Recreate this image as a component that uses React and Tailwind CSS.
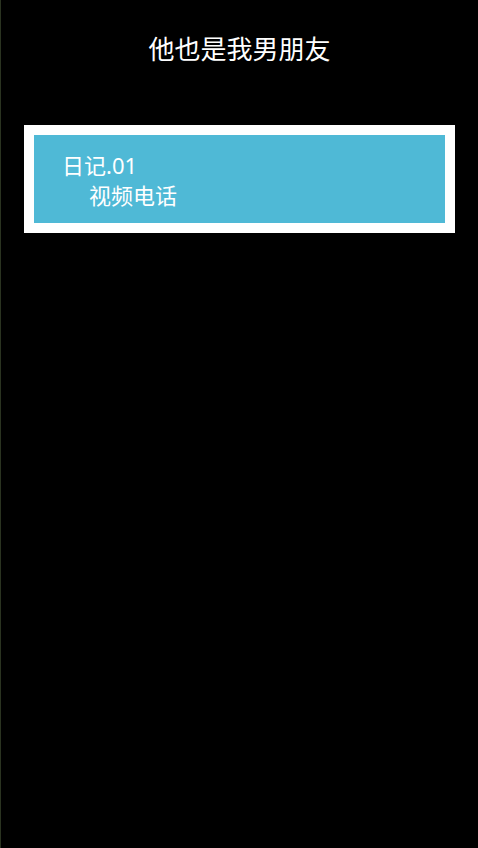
export default function App() {
  return (
    <div
      className="w-[478px] h-[848px] bg-black flex flex-col border-l border-[#2a3320] border-r-[#3a3a30]"
      style={{ fontFamily: '"Noto Sans", "Noto Sans CJK SC", sans-serif' }}
    >
      {/* Header */}
      <div className="h-[100px] flex justify-center pt-[31px]">
        <h1 className="text-[26px] leading-[36px] text-white">他也是我男朋友</h1>
      </div>

      {/* Diary card */}
      <div className="px-[23px] pt-[25px]">
        <div className="bg-white p-[10px]">
          <div className="bg-[#4fb9d6] h-[88px] pl-[28px] pt-[15px] text-white text-[22px] leading-[30px]">
            <div>日记.01</div>
            <div className="pl-[27px]">视频电话</div>
          </div>
        </div>
      </div>
    </div>
  );
}
